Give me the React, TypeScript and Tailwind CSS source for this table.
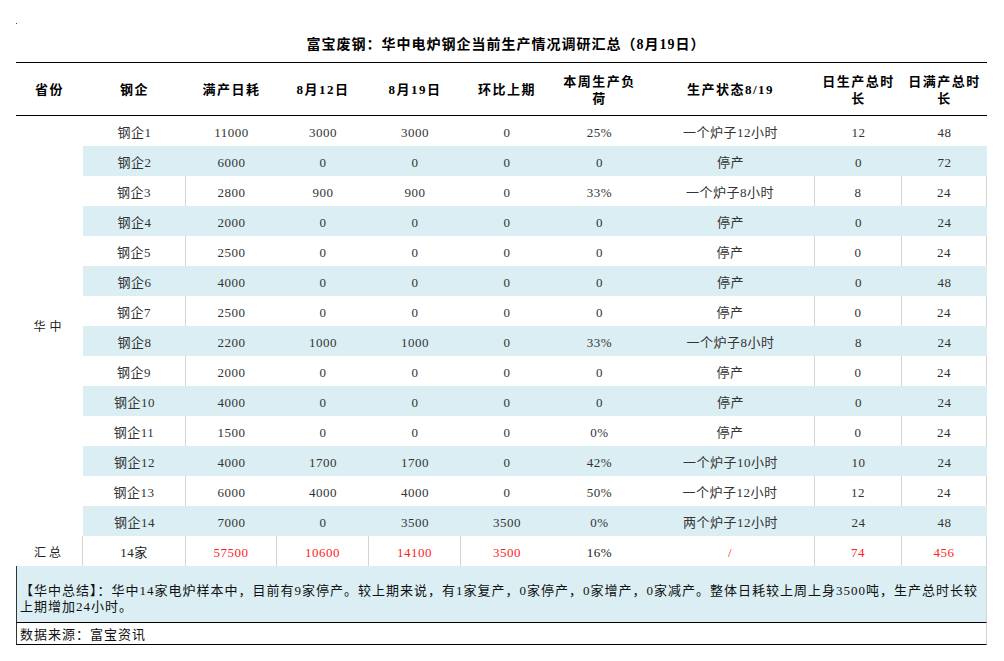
const rows = [
  ["钢企1", "11000", "3000", "3000", "0", "25%", "一个炉子12小时", "12", "48"],
  ["钢企2", "6000", "0", "0", "0", "0", "停产", "0", "72"],
  ["钢企3", "2800", "900", "900", "0", "33%", "一个炉子8小时", "8", "24"],
  ["钢企4", "2000", "0", "0", "0", "0", "停产", "0", "24"],
  ["钢企5", "2500", "0", "0", "0", "0", "停产", "0", "24"],
  ["钢企6", "4000", "0", "0", "0", "0", "停产", "0", "48"],
  ["钢企7", "2500", "0", "0", "0", "0", "停产", "0", "24"],
  ["钢企8", "2200", "1000", "1000", "0", "33%", "一个炉子8小时", "8", "24"],
  ["钢企9", "2000", "0", "0", "0", "0", "停产", "0", "24"],
  ["钢企10", "4000", "0", "0", "0", "0", "停产", "0", "24"],
  ["钢企11", "1500", "0", "0", "0", "0%", "停产", "0", "24"],
  ["钢企12", "4000", "1700", "1700", "0", "42%", "一个炉子10小时", "10", "24"],
  ["钢企13", "6000", "4000", "4000", "0", "50%", "一个炉子12小时", "12", "24"],
  ["钢企14", "7000", "0", "3500", "3500", "0%", "两个炉子12小时", "24", "48"],
];

const headers = [
  ["省份"],
  ["钢企"],
  ["满产日耗"],
  ["8月12日"],
  ["8月19日"],
  ["环比上期"],
  ["本周生产负", "荷"],
  ["生产状态8/19"],
  ["日生产总时", "长"],
  ["日满产总时", "长"],
];

const total = [
  { v: "14家", red: false, line: true },
  { v: "57500", red: true, line: true },
  { v: "10600", red: true, line: true },
  { v: "14100", red: true, line: true },
  { v: "3500", red: true, line: false },
  { v: "16%", red: false, line: false },
  { v: "/", red: true, line: true },
  { v: "74", red: true, line: true },
  { v: "456", red: true, line: true },
];

const cols = "grid grid-cols-[67px_103px_91px_92px_92px_92px_93px_169px_87px_85px]";
const font = { fontFamily: '"Liberation Serif", "Noto Sans CJK SC", serif' };

export default function App() {
  return (
    <div className="w-[1004px] h-[661px] bg-white text-[13px] text-[#333]" style={font}>
      <div className="h-[62px] flex flex-col">
        <div className="mt-[23px] ml-[16px] w-[1px] h-[1px] bg-[#444]" />
        <div className="mt-[12px] leading-[18px] text-center text-[14px] font-bold tracking-[1px] text-black pl-[8px]">
          富宝废钢：华中电炉钢企当前生产情况调研汇总（8月19日）
        </div>
      </div>

      <div className="ml-[16px] w-[971px]">
        {/* header */}
        <div className={`${cols} h-[54px] border-y border-black font-bold text-black tracking-[1.5px]`}>
          {headers.map((h, i) => (
            <div key={i} className="flex flex-col items-center justify-center leading-[17px] pt-[1px]">
              {h.map((line, j) => (
                <span key={j}>{line}</span>
              ))}
            </div>
          ))}
        </div>

        {/* data */}
        <div className={`${cols} auto-rows-[30px] tracking-[0.5px]`}>
          <div className="row-span-14 flex items-center justify-center text-[12px] tracking-[4px] text-[#222] pt-[2px]">
            华中
          </div>
          {rows.map((r, i) => {
            const blue = i % 2 === 1;
            const lines = !blue && i > 0;
            return r.map((v, j) => (
              <div
                key={`${i}-${j}`}
                className={`flex items-center justify-center pt-[4px] ${blue ? "bg-[#daeef3]" : ""} ${
                  lines && (j === 0 || j === 6 || j === 7 || j === 8) ? "border-r border-[#d4d4d4]" : ""
                }`}
              >
                {v}
              </div>
            ));
          })}

          {/* total row */}
          <div className="flex items-center justify-center pt-[4px] border-r border-[#d4d4d4] text-[12px] tracking-[3px] text-[#222]">
            汇总
          </div>
          {total.map((c, j) => (
            <div
              key={j}
              className={`flex items-center justify-center pt-[4px] ${c.red ? "text-[#f22]" : "text-[#222]"} ${
                c.line ? "border-r border-[#d4d4d4]" : ""
              }`}
            >
              {c.v}
            </div>
          ))}
        </div>

        {/* summary */}
        <div className="h-[56px] bg-[#daeef3] border-l border-[#333] border-r border-r-[#d4d4d4] pl-[3px] pt-[17px] leading-[16px] tracking-[1px] text-[#111]">
          【华中总结】：华中14家电炉样本中，目前有9家停产。较上期来说，有1家复产，0家停产，0家增产，0家减产。整体日耗较上周上身3500吨，生产总时长较
          <br />
          上期增加24小时。
        </div>

        <div className="h-[23px] border-y border-black border-l border-l-[#333] border-r border-r-[#d4d4d4] pl-[3px] pt-[3px] flex items-center tracking-[1px] text-[#111]">
          数据来源：富宝资讯
        </div>
      </div>
    </div>
  );
}
